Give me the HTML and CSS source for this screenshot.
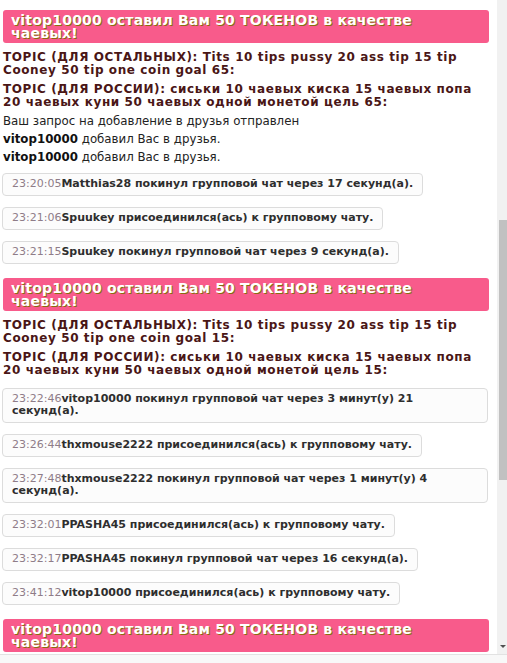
FILE: index.html
```html
<!DOCTYPE html>
<html lang="ru">
<head>
    <meta charset="UTF-8">
    <meta name="viewport" content="width=device-width, initial-scale=1.0">
    <title>Чат</title>
    <link rel="stylesheet" href="styles.css">
</head>
<body>
    <div class="chat-wrap">
        <div class="chat">
            <div class="tip">vitop10000 оставил Вам 50 ТОКЕНОВ в качестве чаевых!</div>
            <div class="topic">TOPIC (ДЛЯ ОСТАЛЬНЫХ): Tits 10 tips pussy 20 ass tip 15 tip Cooney 50 tip one coin goal 65:</div>
            <div class="topic">TOPIC (ДЛЯ РОССИИ): сиськи 10 чаевых киска 15 чаевых попа 20 чаевых куни 50 чаевых одной монетой цель 65:</div>
            <div class="note">Ваш запрос на добавление в друзья отправлен</div>
            <div class="note"><b>vitop10000</b> добавил Вас в друзья.</div>
            <div class="note"><b>vitop10000</b> добавил Вас в друзья.</div>

            <div class="sys"><span class="time">23:20:05</span>Matthias28 покинул групповой чат через 17 секунд(а).</div>
            <div class="sys"><span class="time">23:21:06</span>Spuukey присоединился(ась) к групповому чату.</div>
            <div class="sys"><span class="time">23:21:15</span>Spuukey покинул групповой чат через 9 секунд(а).</div>

            <div class="tip">vitop10000 оставил Вам 50 ТОКЕНОВ в качестве чаевых!</div>
            <div class="topic">TOPIC (ДЛЯ ОСТАЛЬНЫХ): Tits 10 tips pussy 20 ass tip 15 tip Cooney 50 tip one coin goal 15:</div>
            <div class="topic">TOPIC (ДЛЯ РОССИИ): сиськи 10 чаевых киска 15 чаевых попа 20 чаевых куни 50 чаевых одной монетой цель 15:</div>

            <div class="sys"><span class="time">23:22:46</span>vitop10000 покинул групповой чат через 3 минут(у) 21 секунд(а).</div>
            <div class="sys"><span class="time">23:26:44</span>thxmouse2222 присоединился(ась) к групповому чату.</div>
            <div class="sys"><span class="time">23:27:48</span>thxmouse2222 покинул групповой чат через 1 минут(у) 4 секунд(а).</div>
            <div class="sys"><span class="time">23:32:01</span>PPASHA45 присоединился(ась) к групповому чату.</div>
            <div class="sys"><span class="time">23:32:17</span>PPASHA45 покинул групповой чат через 16 секунд(а).</div>
            <div class="sys"><span class="time">23:41:12</span>vitop10000 присоединился(ась) к групповому чату.</div>

            <div class="tip">vitop10000 оставил Вам 50 ТОКЕНОВ в качестве чаевых!</div>
        </div>
        <div class="scrollbar">
            <div class="thumb"></div>
            <div class="arrow"></div>
        </div>
    </div>
    <div class="input-bar"></div>
</body>
</html>
```

FILE: styles.css
```css
* {
    margin: 0;
    padding: 0;
    box-sizing: border-box;
    font-family: 'DejaVu Sans', Verdana, sans-serif;
}

body {
    background-color: white;
    overflow: hidden;
}

.chat-wrap {
    display: flex;
    height: 654px;
}

.chat {
    flex: 1;
    overflow: hidden;
    padding: 10px 9px 0 2px;
    display: flex;
    flex-direction: column;
    align-items: flex-start;
}

.tip {
    width: 486px;
    margin-left: 1px;
    background-color: #f85b8b;
    color: white;
    font-size: 14px;
    letter-spacing: 0.2px;
    font-weight: bold;
    line-height: 13px;
    padding: 4px 8px 3px;
    border-radius: 3px;
    text-shadow: 1px 1px 0 #8a6a10;
    margin-bottom: 8px;
}

.topic {
    color: #4a1616;
    font-size: 12px;
    letter-spacing: 0.6px;
    font-weight: bold;
    line-height: 13px;
    margin: 0 0 6px 1px;
}

.note {
    color: #222;
    font-size: 11.8px;
    line-height: 13px;
    margin: 0 0 5px 1px;
}

.note b {
    color: #111;
}

.sys {
    max-width: 486px;
    background-color: #fcfcfc;
    border: 1px solid #dcdcdc;
    border-radius: 4px;
    padding: 4px 9px 5px;
    color: #2e2e2e;
    font-size: 11px;
    font-weight: bold;
    line-height: 12px;
    margin-bottom: 11px;
}

.note + .sys {
    margin-top: 4px;
}

.topic + .sys {
    margin-top: 5px;
}

.sys + .tip {
    margin-top: 3px;
}

.time {
    color: #8f7c88;
    font-weight: normal;
}

.scrollbar {
    width: 10px;
    background-color: #f1f1f1;
    display: flex;
    flex-direction: column;
    align-items: flex-end;
}

.thumb {
    width: 8px;
    height: 260px;
    margin-top: 220px;
    background-color: #c1c1c1;
}

.arrow {
    margin-top: auto;
    margin-bottom: 6px;
    margin-right: 1px;
    width: 0;
    height: 0;
    border-left: 3px solid transparent;
    border-right: 3px solid transparent;
    border-top: 3px solid #505050;
}

.input-bar {
    height: 9px;
    border-top: 1px solid #e2e2e2;
    background-color: #f8f8f8;
}
```
